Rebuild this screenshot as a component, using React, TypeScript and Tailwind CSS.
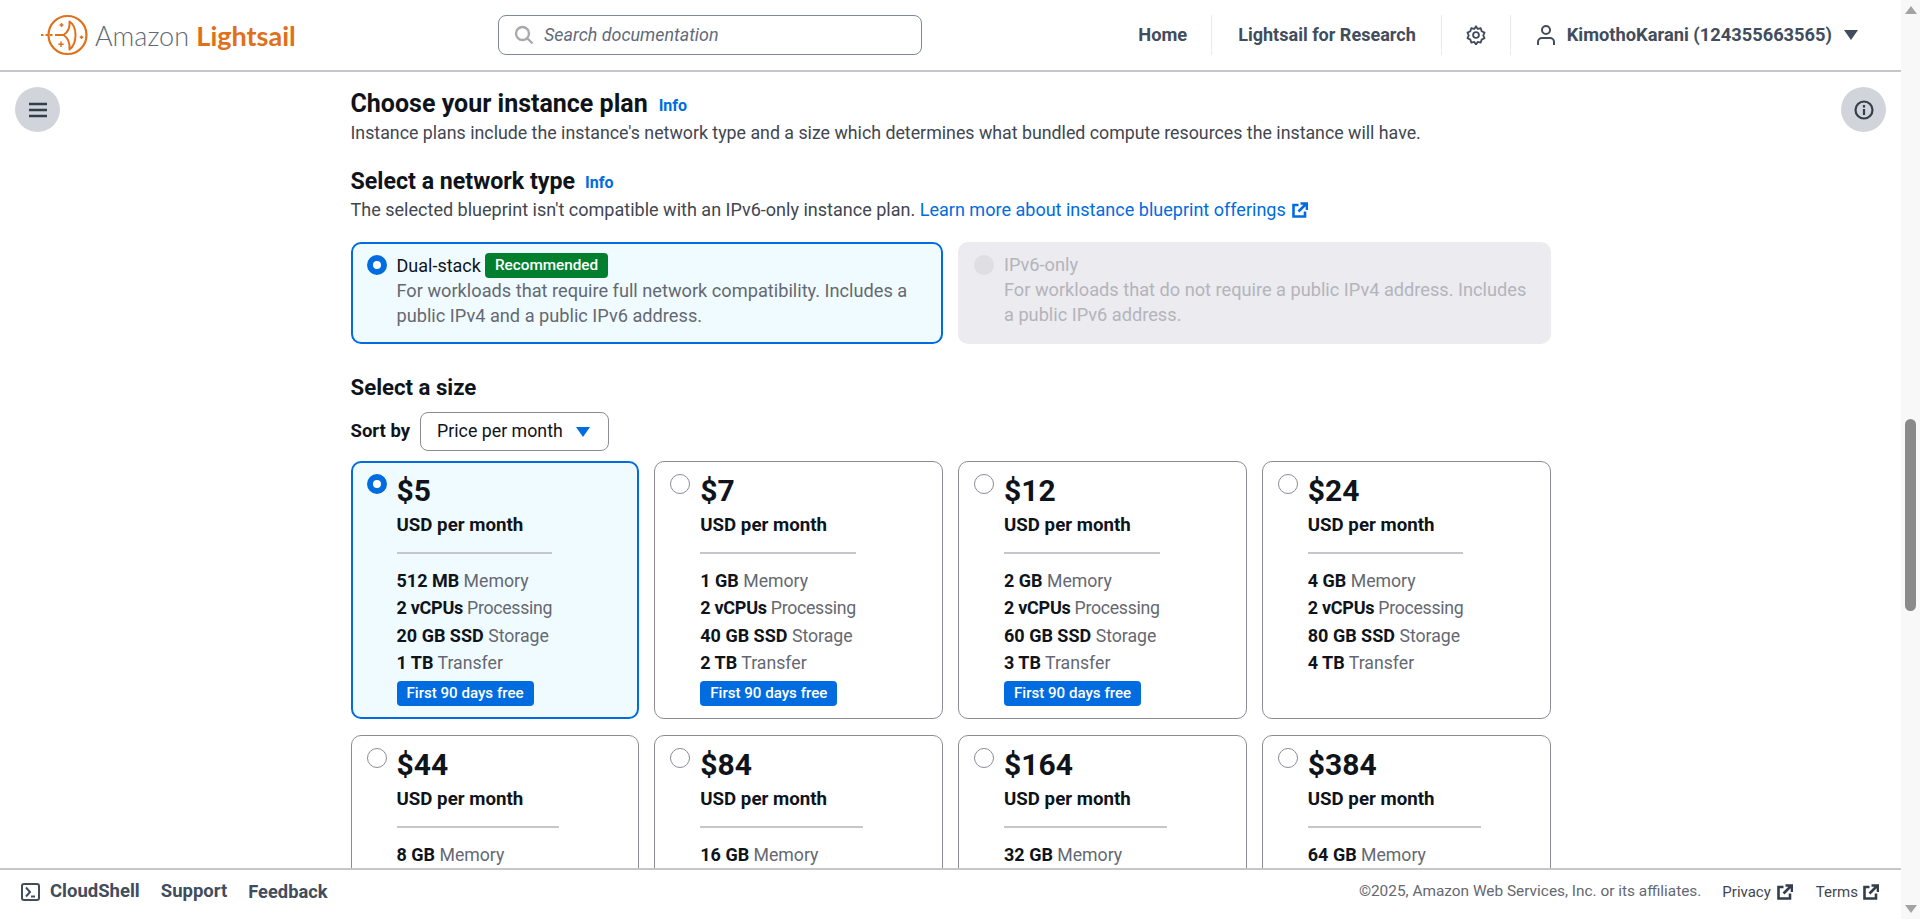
import React from "react";

const F = "font-['Roboto','Noto_Sans',sans-serif]";

function Logo() {
  return (
    <svg width="48" height="42" viewBox="40 14 48 42" fill="none" stroke="#e0701a" strokeWidth="2.2" className="block">
      <circle cx="67.500" cy="35" r="19" />
      <path d="M41 35h2.500M45.500 35h2.500M50 35h2.500M55 35h8.500" strokeWidth="1.800" />
      <path d="M69.500 21.500c.5 6-2 11-6 13.500 4 2.500 6.500 7.500 6 14.500 4-3 6-8 6-14.500s-2-11-6-13.500z" strokeWidth="2" strokeLinejoin="round" />
      <path d="M61.500 23v4M59.500 25h4M61 41.500v5.500M58.300 44.300h5.400M81.500 35.500v3.500M79.700 37.300h3.600" strokeWidth="1.500" />
    </svg>
  );
}

function Radio({ state }: { state: "on" | "off" | "disabled" }) {
  if (state === "on")
    return <span className="block h-5 w-5 shrink-0 rounded-full border-[6px] border-[#006ce0] bg-white" />;
  if (state === "disabled")
    return <span className="block h-5 w-5 shrink-0 rounded-full bg-[#dedee3]" />;
  return <span className="block h-5 w-5 shrink-0 rounded-full border-[1.5px] border-[#8c8c94] bg-white" />;
}

function ExtIcon({ color }: { color: string }) {
  return (
    <svg width="16" height="16" viewBox="0 0 16 16" fill="none" stroke={color} strokeWidth="2.600" className="block shrink-0">
      <path d="M6.500 3H1.500v11.500H13V9.500" />
      <path d="M6.500 9.500L14 2M8.500 1.500h6.500v6.500" />
    </svg>
  );
}

function Info({ className }: { className: string }) {
  return <a className={`font-bold text-[#006ce0] text-[16px] ${className}`}>Info</a>;
}

type Plan = {
  price: string;
  rows: [string, string][];
  free?: boolean;
  selected?: boolean;
};

const plans: Plan[] = [
  { price: "$5", selected: true, free: true, rows: [["512 MB", "Memory"], ["2 vCPUs", "Processing"], ["20 GB SSD", "Storage"], ["1 TB", "Transfer"]] },
  { price: "$7", free: true, rows: [["1 GB", "Memory"], ["2 vCPUs", "Processing"], ["40 GB SSD", "Storage"], ["2 TB", "Transfer"]] },
  { price: "$12", free: true, rows: [["2 GB", "Memory"], ["2 vCPUs", "Processing"], ["60 GB SSD", "Storage"], ["3 TB", "Transfer"]] },
  { price: "$24", rows: [["4 GB", "Memory"], ["2 vCPUs", "Processing"], ["80 GB SSD", "Storage"], ["4 TB", "Transfer"]] },
  { price: "$44", rows: [["8 GB", "Memory"], ["2 vCPUs", "Processing"], ["160 GB SSD", "Storage"], ["5 TB", "Transfer"]] },
  { price: "$84", rows: [["16 GB", "Memory"], ["4 vCPUs", "Processing"], ["320 GB SSD", "Storage"], ["6 TB", "Transfer"]] },
  { price: "$164", rows: [["32 GB", "Memory"], ["8 vCPUs", "Processing"], ["640 GB SSD", "Storage"], ["7 TB", "Transfer"]] },
  { price: "$384", rows: [["64 GB", "Memory"], ["16 vCPUs", "Processing"], ["1280 GB SSD", "Storage"], ["8 TB", "Transfer"]] },
];

function PlanCard({ plan }: { plan: Plan }) {
  return (
    <div
      className={`flex h-[258px] gap-[10px] rounded-[10px] pl-4 pt-3 ${
        plan.selected ? "border-2 border-[#006ce0] bg-[#f0fbff] pl-[14px] pt-[11px]" : "border border-[#8c8c94] pl-[15px]"
      }`}
    >
      <Radio state={plan.selected ? "on" : "off"} />
      <div className="flex w-fit flex-col">
        <div className="mt-[2px] text-[30px] font-bold leading-[30px] text-[#0f141a]">{plan.price}</div>
        <div className="mt-[7px] whitespace-nowrap text-[18.7px] font-bold leading-[24px] text-[#0f141a]">USD per month</div>
        <div className="mt-[15px] h-[2px] w-full bg-[#c6c6cd]" />
        <div className="mt-[14px] flex flex-col">
          {plan.rows.map(([a, b]) => (
            <div
              key={b}
              className={`h-[27.35px] whitespace-nowrap text-[17.7px] leading-[26.5px] text-[#656871] ${
                b === "Processing" ? "tracking-[-0.28px]" : ""
              }`}
            >
              <b className="text-[18px] font-bold text-[#0f141a]">{a}</b> {b}
            </div>
          ))}
        </div>
        {plan.free && (
          <div className="mt-[4px] w-fit whitespace-nowrap rounded-[4px] bg-[#006ce0] px-[10px] text-[15.1px] font-medium leading-[25px] text-white">
            First 90 days free
          </div>
        )}
      </div>
    </div>
  );
}

export default function App() {
  return (
    <div className={`flex h-screen overflow-hidden bg-white ${F}`}>
      <div className="relative flex min-w-0 flex-1 flex-col">
        <header className="flex h-[72px] shrink-0 items-center border-b-2 border-[#c6c6cd] bg-white">
          <div className="ml-[40px] flex w-[458px] items-center gap-[7px]">
            <Logo />
            <span className="whitespace-nowrap font-['Lato',sans-serif] text-[27px] font-light leading-none text-[#5f6b75]">
              Amazon <span className="text-[27px] font-bold text-[#e0701a]">Lightsail</span>
            </span>
          </div>
          <div className="flex h-[40px] w-[424px] items-center gap-[10px] rounded-[8px] border border-[#7d8998] pl-[15px]">
            <svg width="20" height="20" viewBox="0 0 20 20" fill="none" stroke="#a9a9b1" strokeWidth="2.400">
              <circle cx="8.500" cy="8.500" r="6.500" />
              <path d="M13.500 13.500L18.500 18.500" />
            </svg>
            <span className="text-[17.9px] italic text-[#5f6b7a]">Search documentation</span>
          </div>
          <nav className="ml-auto flex h-[40px] items-center text-[18.300px] font-bold text-[#414d5c]">
            <span className="flex h-full items-center border-r border-[#e9ebed] pr-6">Home</span>
            <span className="flex h-full items-center border-r border-[#e9ebed] pl-[26px] pr-[25px] text-[18.050px]">Lightsail for Research</span>
            <span className="flex h-full w-[69px] items-center justify-center border-r border-[#e9ebed]">
              <svg width="20" height="20" viewBox="0 0 24 24" fill="none" stroke="#414d5c" strokeWidth="2.200" strokeLinejoin="round">
                <path d="M12 1.500l2 3.200 3.700-.8 1.100 3.600 3.400 1.700-1.500 3.300 1.500 3.300-3.400 1.700-1.100 3.600-3.700-.8-2 3.200-2-3.200-3.700.8-1.100-3.600-3.400-1.700 1.500-3.300-1.500-3.300 3.400-1.700 1.100-3.600 3.700.8z" />
                <circle cx="12" cy="12" r="3.500" />
              </svg>
            </span>
            <span className="flex h-full items-center whitespace-nowrap pl-[25px] pr-[43px]">
              <svg width="20" height="22" viewBox="0 0 20 22" fill="none" stroke="#414d5c" strokeWidth="2" className="mr-[11px]">
                <circle cx="10" cy="6" r="4" />
                <path d="M2 21v-3a4 4 0 0 1 4-4h8a4 4 0 0 1 4 4v3" />
              </svg>
              KimothoKarani (124355663565)
              <span className="ml-[12px] h-0 w-0 border-x-[7px] border-t-[10px] border-x-transparent border-t-[#414d5c]" />
            </span>
          </nav>
        </header>

        <button className="absolute left-[15px] top-[87px] flex h-[45px] w-[45px] items-center justify-center rounded-full bg-[#d1d5db]">
          <svg width="18" height="16" viewBox="0 0 18 16" fill="none" stroke="#333e4a" strokeWidth="2.400">
            <path d="M0 2h18M0 8h18M0 14h18" />
          </svg>
        </button>
        <button className="absolute right-[15px] top-[87px] flex h-[45px] w-[45px] items-center justify-center rounded-full bg-[#d1d5db]">
          <svg width="20" height="20" viewBox="0 0 20 20" fill="none" stroke="#333e4a" strokeWidth="2.200">
            <circle cx="10" cy="10" r="8.500" />
            <path d="M10 9v6M10 5v2.500" />
          </svg>
        </button>

        <main className="min-h-0 flex-1 overflow-hidden">
          <div className="mx-auto w-[1200px] pt-[16px]">
            <div className="flex items-center gap-[11px]">
              <h1 className="text-[25px] font-bold leading-[32px] text-[#0f141a]">Choose your instance plan</h1>
              <Info className="mt-[3px]" />
            </div>
            <p className="mt-[1px] whitespace-nowrap text-[17.8px] leading-[24px] text-[#424650]">
              Instance plans include the instance's network type and a size which determines what bundled compute resources the instance will have.
            </p>

            <div className="mt-[22px] flex items-center gap-[10px]">
              <h2 className="text-[23.200px] font-bold leading-[28px] text-[#0f141a]">Select a network type</h2>
              <Info className="mt-[3px]" />
            </div>
            <p className="mt-[3px] flex items-center whitespace-nowrap text-[18.050px] leading-[24px] text-[#424650]">
              The selected blueprint isn't compatible with an IPv6-only instance plan.&nbsp;
              <a className="text-[#006ce0]">Learn more about instance blueprint offerings</a>
              <span className="ml-[6px]"><ExtIcon color="#006ce0" /></span>
            </p>

            <div className="mt-[20px] grid grid-cols-2 gap-[15px]">
              <div className="flex h-[102px] gap-[10px] rounded-[10px] border-2 border-[#006ce0] bg-[#f0fbff] pl-[14px] pt-[11px]">
                <Radio state="on" />
                <div className="-mt-[2px]">
                  <div className="flex items-center gap-[4px] text-[18px] leading-[25px] text-[#0f141a]">
                    Dual-stack
                    <span className="rounded-[4px] bg-[#00802f] px-[10px] text-[15.300px] font-medium leading-[25px] text-white">Recommended</span>
                  </div>
                  <div className="w-[530px] text-[18.200px] leading-[25px] text-[#656871]">
                    For workloads that require full network compatibility. Includes a public IPv4 and a public IPv6 address.
                  </div>
                </div>
              </div>
              <div className="flex h-[102px] gap-[10px] rounded-[10px] bg-[#ebebf0] pl-4 pt-[13px]">
                <Radio state="disabled" />
                <div className="-mt-[3px] text-[18.200px] leading-[25px] text-[#b4b4bb]">
                  <div>IPv6-only</div>
                  <div className="w-[530px]">For workloads that do not require a public IPv4 address. Includes a public IPv6 address.</div>
                </div>
              </div>
            </div>

            <h2 className="mt-[29px] text-[22.200px] font-bold leading-[28px] text-[#0f141a]">Select a size</h2>
            <div className="mt-[11px] flex items-center gap-[10px]">
              <span className="text-[18.500px] font-bold text-[#0f141a]">Sort by</span>
              <div className="flex h-[39px] w-[189px] items-center justify-between rounded-[8px] border border-[#8c8c94] pl-4 pr-[18px] text-[17.8px] text-[#0f141a]">
                Price per month
                <span className="h-0 w-0 border-x-[7px] border-t-[10px] border-x-transparent border-t-[#006ce0]" />
              </div>
            </div>

            <div className="mt-[10px] grid grid-cols-4 gap-x-[15px] gap-y-[16px]">
              {plans.map((p) => (
                <PlanCard key={p.price} plan={p} />
              ))}
            </div>
          </div>
        </main>

        <footer className="flex h-[51px] shrink-0 items-center border-t-2 border-[#c6c6cd] bg-white pb-[5px] pl-[21px] pr-[22px] text-[15px] text-[#424650]">
          <svg width="19" height="18" viewBox="0 0 19 18" fill="none" stroke="#414d5c" strokeWidth="2" className="mr-[10px]">
            <rect x="1" y="1" width="17" height="16" rx="2" />
            <path d="M5 4.500l4 4.500-4 4.500M10 13.500h4" />
          </svg>
          <span className="text-[18.500px] font-bold text-[#414d5c]">CloudShell</span>
          <span className="ml-[21px] text-[18.500px] font-bold text-[#414d5c]">Support</span>
          <span className="ml-[21px] text-[18.300px] font-bold text-[#414d5c]">Feedback</span>
          <span className="ml-auto text-[15.400px] text-[#656871]">©2025, Amazon Web Services, Inc. or its affiliates.</span>
          <span className="ml-[21px]">Privacy</span>
          <span className="ml-[6px]"><ExtIcon color="#333e4a" /></span>
          <span className="ml-[23px]">Terms</span>
          <span className="ml-[5px]"><ExtIcon color="#333e4a" /></span>
        </footer>
      </div>

      <aside className="flex w-[19px] shrink-0 flex-col items-center justify-between bg-[#f8f8f8] py-[6px]">
        <span className="h-0 w-0 border-x-[6px] border-b-[8px] border-x-transparent border-b-[#a3a3a3]" />
        <span className="h-0 w-0 border-x-[6px] border-t-[8px] border-x-transparent border-t-[#a3a3a3]" />
      </aside>
      <span className="absolute right-[4px] top-[419px] h-[192px] w-[11px] rounded-full bg-[#8a8a8a]" />
    </div>
  );
}
